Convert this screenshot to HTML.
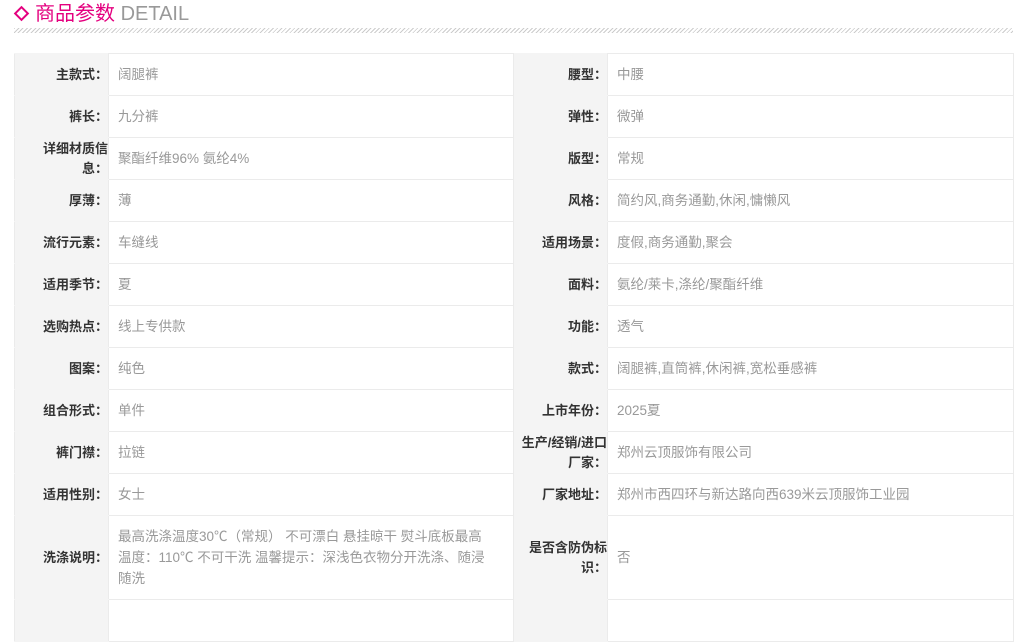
<!DOCTYPE html>
<html><head><meta charset="utf-8"><style>
body{margin:0;background:#fff;font-family:"Liberation Sans","Noto Sans CJK SC",sans-serif;width:1025px;height:606px;overflow:hidden;position:relative}
.h{position:absolute;left:14px;top:0;height:28px;font-size:20px;line-height:28px;white-space:nowrap}
.h .d{display:inline-block;width:7px;height:7px;border:2px solid #e4007f;transform:rotate(45deg);margin:0 8px 3px 2px;vertical-align:middle}
.h .p{color:#e4007f}.h .e{color:#999}
.hatch{position:absolute;left:14px;top:28px;width:999px;height:5px;background:repeating-linear-gradient(135deg,#ccc 0 1px,#fff 1px 3px)}
table{position:absolute;left:14px;top:53px;border-collapse:collapse;width:999px;table-layout:fixed;font-size:13.5px}
td{height:41px;border:1px solid #ebebeb;padding:0 18px 0 9px;line-height:21px}
td.l{background:#f4f4f4;color:#333;font-weight:bold;text-align:right;font-size:13px;line-height:20px;padding:0 0 0 6px;border-top-color:#f4f4f4;border-bottom-color:#f4f4f4}
td.v{color:#999}
</style></head><body>
<div class="h"><span class="d"></span><span class="p">商品参数</span> <span class="e">DETAIL</span></div>
<div class="hatch"></div>
<table>
<colgroup><col style="width:94px"><col style="width:405px"><col style="width:94px"><col style="width:406px"></colgroup>
<tr><td class="l">主款式：</td><td class="v">阔腿裤</td><td class="l">腰型：</td><td class="v">中腰</td></tr>
<tr><td class="l">裤长：</td><td class="v">九分裤</td><td class="l">弹性：</td><td class="v">微弹</td></tr>
<tr><td class="l">详细材质信息：</td><td class="v">聚酯纤维96% 氨纶4%</td><td class="l">版型：</td><td class="v">常规</td></tr>
<tr><td class="l">厚薄：</td><td class="v">薄</td><td class="l">风格：</td><td class="v">简约风,商务通勤,休闲,慵懒风</td></tr>
<tr><td class="l">流行元素：</td><td class="v">车缝线</td><td class="l">适用场景：</td><td class="v">度假,商务通勤,聚会</td></tr>
<tr><td class="l">适用季节：</td><td class="v">夏</td><td class="l">面料：</td><td class="v">氨纶/莱卡,涤纶/聚酯纤维</td></tr>
<tr><td class="l">选购热点：</td><td class="v">线上专供款</td><td class="l">功能：</td><td class="v">透气</td></tr>
<tr><td class="l">图案：</td><td class="v">纯色</td><td class="l">款式：</td><td class="v">阔腿裤,直筒裤,休闲裤,宽松垂感裤</td></tr>
<tr><td class="l">组合形式：</td><td class="v">单件</td><td class="l">上市年份：</td><td class="v">2025夏</td></tr>
<tr><td class="l">裤门襟：</td><td class="v">拉链</td><td class="l">生产/经销/进口厂家：</td><td class="v">郑州云顶服饰有限公司</td></tr>
<tr><td class="l">适用性别：</td><td class="v">女士</td><td class="l">厂家地址：</td><td class="v">郑州市西四环与新达路向西639米云顶服饰工业园</td></tr>
<tr><td class="l" style="height:83px">洗涤说明：</td><td class="v">最高洗涤温度30℃（常规） 不可漂白 悬挂晾干 熨斗底板最高温度：110℃ 不可干洗 温馨提示：深浅色衣物分开洗涤、随浸随洗</td><td class="l">是否含防伪标识：</td><td class="v">否</td></tr>
<tr><td class="l"></td><td class="v"></td><td class="l"></td><td class="v"></td></tr>
</table>
</body></html>
